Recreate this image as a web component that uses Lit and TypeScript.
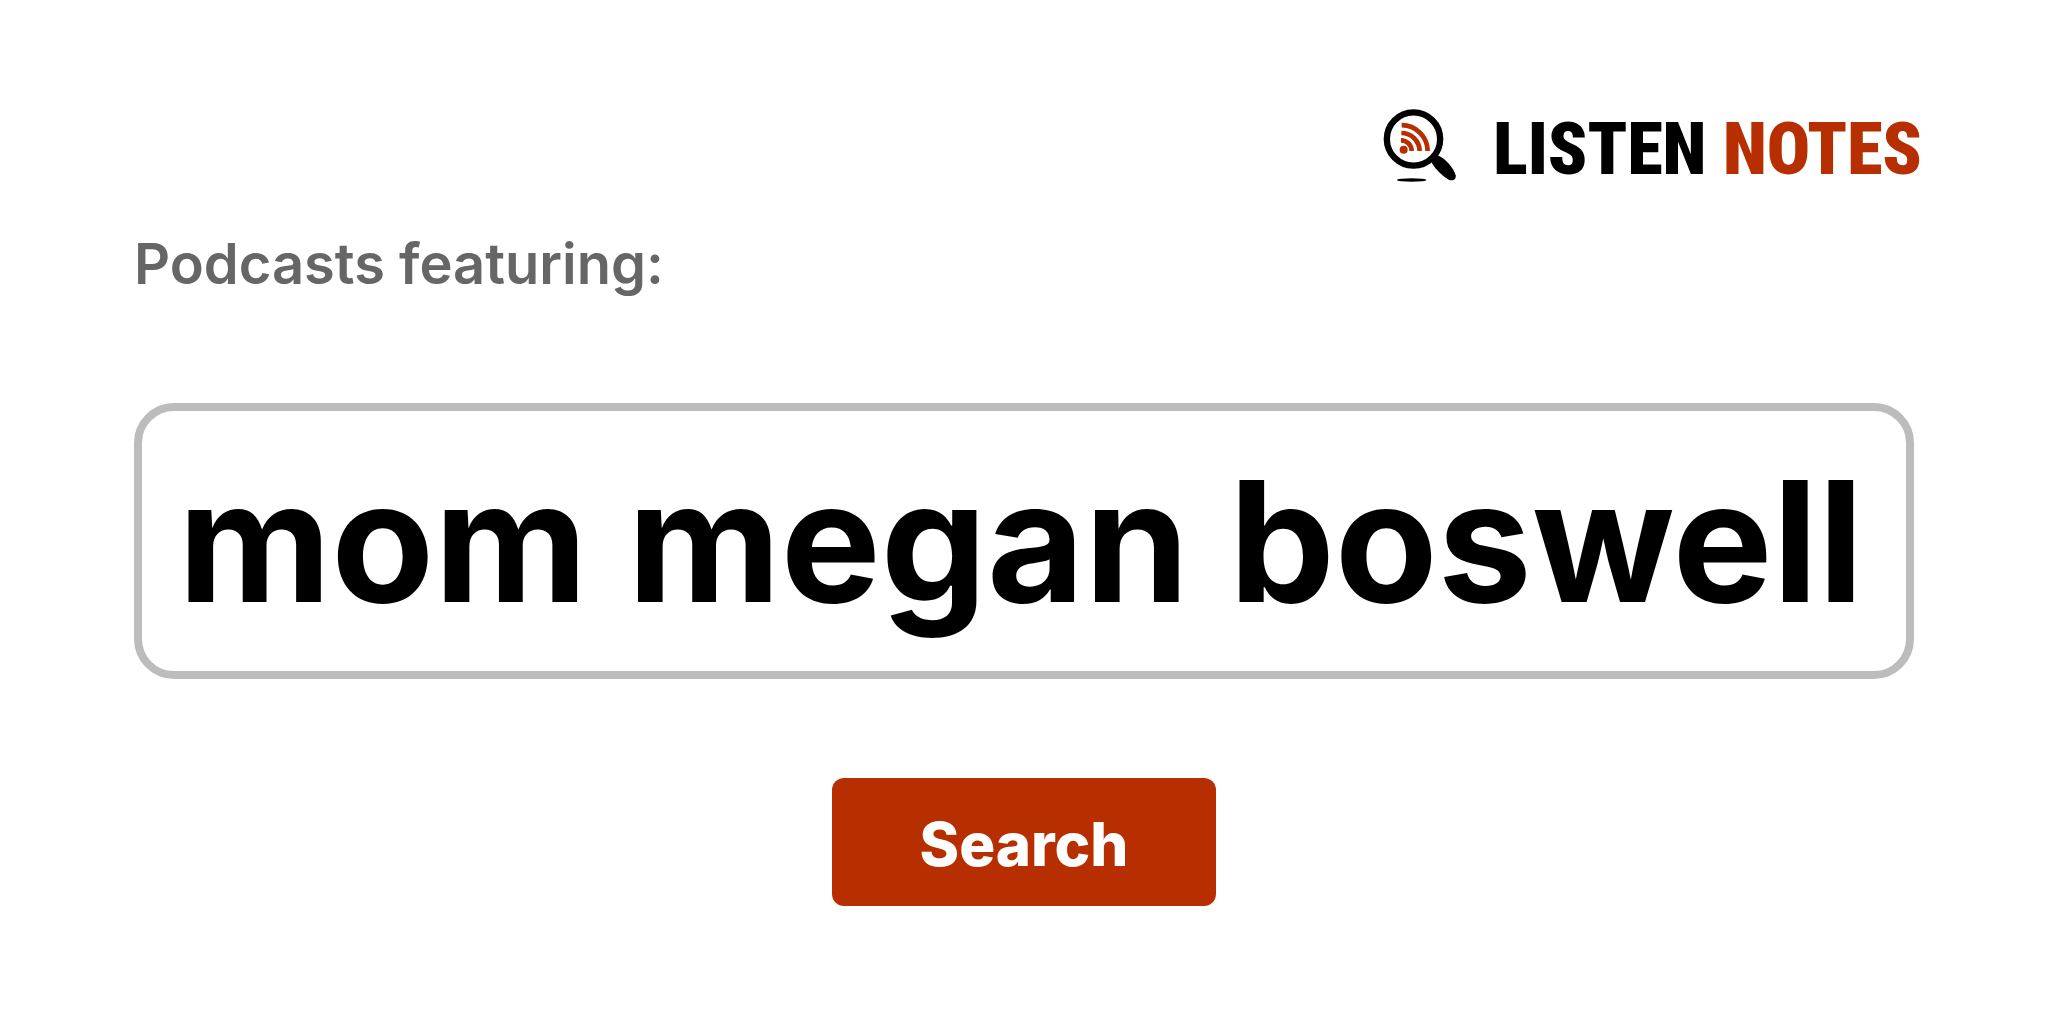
import { LitElement, html, css } from "lit";
import { customElement } from "lit/decorators.js";

@customElement("app-root")
export class AppRoot extends LitElement {
  static styles = css`
    :host { display: block; background: #fff; color: #000; font-family: Inter, "Liberation Sans", sans-serif; }
    .page { box-sizing: border-box; min-height: 100vh; padding: 108px 134px 0; display: flex; flex-direction: column; }
    .brand { display: flex; align-self: flex-end; align-items: flex-start; gap: 36px; margin-right: -8px; color: inherit; text-decoration: none; }
    .mark { width: 74px; height: 75px; flex: none; }
    .name { font-family: "Roboto Condensed", Roboto, sans-serif; font-weight: 900; font-size: 72px; line-height: 84px; white-space: nowrap; }
    .accent { color: #b72f00; }
    .search { display: flex; flex-direction: column; }
    .label { color: #666; font-weight: 600; font-size: 56px; line-height: 72px; margin: 36px 0 103px; }
    .field { box-sizing: border-box; width: 100%; height: 276px; border: 8px solid #bcbcbc; border-radius: 40px; background: #fff; padding: 0 36px; font: 700 168px/200px Inter, "Liberation Sans", sans-serif; color: #000; outline: none; }
    .submit { align-self: center; margin-top: 99px; width: 384px; height: 128px; border: 0; border-radius: 12px; background: #b72f00; color: #fff; padding: 4px 0 0; font: 800 60px/72px Inter, "Liberation Sans", sans-serif; cursor: pointer; }
  `;

  render() {
    return html`
      <main class="page">
        <a class="brand" href="#">
          <svg class="mark" viewBox="39 24 222 225" aria-hidden="true">
            <circle cx="130.5" cy="117" r="80" fill="none" stroke="#000" stroke-width="19" />
            <path d="M186 190L180 172L190 162L207 168C226 176 250 202 257 226C259 240 248 244 236 239C219 230 198 210 186 190Z" />
            <ellipse cx="125" cy="240" rx="44" ry="5" />
            <g fill="none" stroke="#b72f00" stroke-width="14">
              <path d="M95 75.500A78 78 0 0 1 173 153" />
              <path d="M94 99A55 55 0 0 1 149 153" />
              <path d="M93 121A32 32 0 0 1 125 153" />
            </g>
            <circle cx="101" cy="149" r="12" fill="#b72f00" />
          </svg>
          <span class="name">LISTEN <span class="accent">NOTES</span></span>
        </a>
        <form class="search" @submit=${(e: Event) => e.preventDefault()}>
          <label class="label" for="query">Podcasts featuring:</label>
          <input class="field" id="query" type="text" value="mom megan boswell" />
          <button class="submit" type="submit">Search</button>
        </form>
      </main>
    `;
  }
}
